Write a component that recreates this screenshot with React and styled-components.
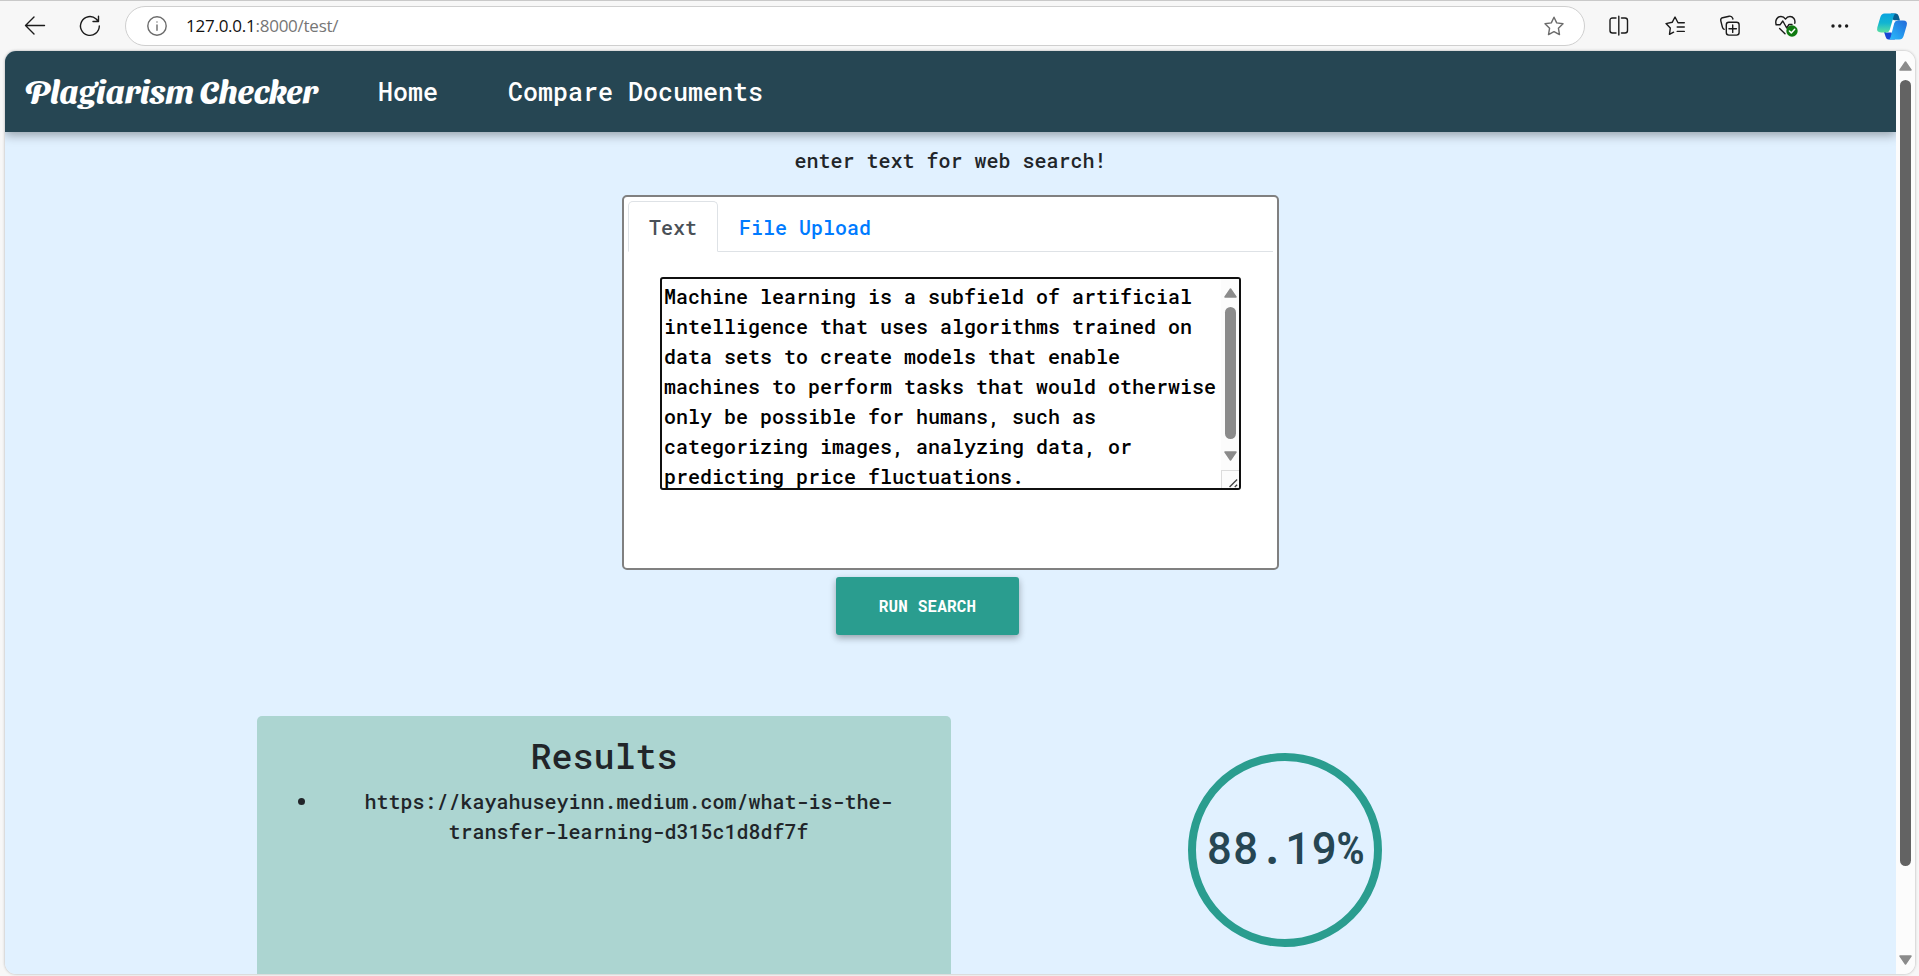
import React from 'react';
import styled, { createGlobalStyle } from 'styled-components';

const Global = createGlobalStyle`
  * { box-sizing: border-box; }
  body { margin: 0; background: #f7f7f7; overflow: hidden; }
`;

const mono = `'Roboto Mono', 'DejaVu Sans Mono', 'Liberation Mono', monospace`;

const Browser = styled.div`
  width: 100%;
  height: 976px;
  display: flex;
  flex-direction: column;
  background: #f7f7f7;
  overflow: hidden;
  font-family: ${mono};
  font-size: 20px;
  font-weight: 500;
  line-height: 30px;
  color: #212529;
`;

const Toolbar = styled.header`
  height: 51px;
  flex: none;
  display: flex;
  align-items: center;
  border-top: 1px solid #c9c9c9;
  padding: 0 5px 0 24px;
`;

const ToolIcon = styled.svg`
  width: ${(p) => p.$w || 22}px;
  height: ${(p) => p.$h || 22}px;
  flex: none;
  margin-left: ${(p) => p.$gap || 0}px;
  fill: none;
  stroke: ${(p) => p.$color || '#1b1b1b'};
  stroke-width: 1.4;
  stroke-linecap: round;
  stroke-linejoin: round;
  overflow: visible;
`;

const AddressBar = styled.div`
  width: 1460px;
  height: 40px;
  flex: none;
  margin-left: 24px;
  padding: 0 20px 0 21px;
  display: flex;
  align-items: center;
  background: #fff;
  border: 1px solid #cfcfcf;
  border-radius: 20px;
`;

const Url = styled.div`
  flex: 1;
  margin-left: 19px;
  font: 17px/24px 'Open Sans', 'Noto Sans', sans-serif;
  letter-spacing: -0.25px;
  color: #767676;
`;

const Host = styled.span`
  color: #111;
`;

const Frame = styled.div`
  height: 923px;
  flex: none;
  margin: 0 4px 0 5px;
  display: flex;
  border-radius: 11px;
  overflow: hidden;
  box-shadow: 0 0 3px rgba(0, 0, 0, 0.3);
`;

const Page = styled.main`
  flex: 1;
  min-width: 0;
  display: flex;
  flex-direction: column;
  align-items: center;
  background: #e1f1ff;
`;

const Navbar = styled.nav`
  width: 100%;
  height: 81px;
  flex: none;
  display: flex;
  align-items: center;
  padding-left: 20px;
  background: #264653;
  box-shadow: 0 3px 10px rgba(0, 0, 0, 0.35);
  color: #fff;
`;

const Brand = styled.div`
  width: 296px;
  padding-bottom: 3px;
  font: bold 32.5px/40px 'Sansita Swashed', 'DejaVu Serif Condensed', 'DejaVu Serif', serif;
  white-space: nowrap;
`;

const NavLink = styled.a`
  margin-left: ${(p) => p.$gap}px;
  font-size: 25px;
  line-height: 38px;
`;

const Prompt = styled.p`
  margin: 13px 0 20px;
`;

const Card = styled.section`
  width: 657px;
  height: 375px;
  flex: none;
  padding: 4px;
  display: flex;
  flex-direction: column;
  background: #fff;
  border: 2px solid #808080;
  border-radius: 5px;
`;

const Tabs = styled.div`
  height: 51px;
  display: flex;
  border-bottom: 1px solid #dee2e6;
`;

const Tab = styled.div`
  height: 51px;
  padding: 10px 20px;
  border: 1px solid ${(p) => (p.$active ? '#dee2e6' : 'transparent')};
  border-bottom-color: ${(p) => (p.$active ? '#fff' : 'transparent')};
  border-radius: 5px 5px 0 0;
  color: ${(p) => (p.$active ? '#495057' : '#007bff')};
`;

const TextBox = styled.div`
  width: 581px;
  height: 213px;
  margin: 25px 0 0 32px;
  display: flex;
  background: #fff;
  border: 2px solid #101010;
  border-radius: 3px;
  overflow: hidden;
  color: #000;
`;

const TextContent = styled.div`
  flex: 1;
  padding: 2px 0 0 2px;
  white-space: pre;
`;

const ScrollTrack = styled.div`
  width: ${(p) => p.$w}px;
  flex: none;
  display: flex;
  flex-direction: column;
  align-items: center;
  padding-top: ${(p) => p.$top}px;
  background: #fcfcfc;
`;

const Arrow = styled.svg`
  width: 13px;
  height: 10px;
  flex: none;
  fill: #8b8b8b;
  stroke: #8b8b8b;
  stroke-width: 1.5;
  stroke-linejoin: round;
`;

const Thumb = styled.div`
  width: 11px;
  height: ${(p) => p.$h}px;
  flex: none;
  margin: ${(p) => p.$m};
  border-radius: 6px;
  background: ${(p) => p.$color};
`;

const Grip = styled.svg`
  width: 18px;
  height: 18px;
  margin-top: 9px;
  border: solid #dcdcdc;
  border-width: 1px 0 0 1px;
  stroke: #444;
  stroke-width: 1.4;
`;

const RunButton = styled.button`
  width: 183px;
  height: 58px;
  flex: none;
  margin: 7px 46px 0 0;
  padding: 0;
  border: 0;
  border-radius: 3px;
  background: #2a9d8f;
  box-shadow: 0 3px 7px rgba(0, 0, 0, 0.33);
  color: #fff;
  font: bold 16px/24px ${mono};
  letter-spacing: 0.13px;
`;

const Outcome = styled.div`
  width: 100%;
  flex: 1;
  min-height: 0;
  margin-top: 81px;
  padding-left: 252px;
  display: flex;
  align-items: flex-start;
`;

const Results = styled.section`
  width: 694px;
  height: 258px;
  padding-top: 18px;
  background: #acd5d1;
  border-radius: 5px 5px 0 0;
  text-align: center;
`;

const Heading = styled.h2`
  margin: 0;
  font-size: 35px;
  line-height: 42px;
  font-weight: 500;
`;

const List = styled.ul`
  margin: 10px 0 0;
  padding-left: 50px;
  list-style: none;
`;

const ListItem = styled.li`
  display: flex;
  align-items: flex-start;
`;

const Bullet = styled.span`
  width: 7px;
  height: 7px;
  flex: none;
  margin: 12px 0 0 -9px;
  border-radius: 50%;
  background: currentColor;
`;

const ResultLink = styled.span`
  flex: 1;
  padding-left: 1px;
`;

const Score = styled.div`
  width: 194px;
  height: 194px;
  flex: none;
  margin: 37px 0 0 237px;
  padding-bottom: 6px;
  display: flex;
  align-items: center;
  justify-content: center;
  border: 8px solid #2a9d8f;
  border-radius: 50%;
  color: #264653;
  font-size: 43.75px;
  line-height: 56px;
`;

const UpArrow = () => (
  <Arrow viewBox="0 0 13 10"><path d="M6.5 1 L12 9 H1 Z" /></Arrow>
);
const DownArrow = () => (
  <Arrow viewBox="0 0 13 10"><path d="M6.5 9 L12 1 H1 Z" /></Arrow>
);

const passage = [
  'Machine learning is a subfield of artificial',
  'intelligence that uses algorithms trained on',
  'data sets to create models that enable',
  'machines to perform tasks that would otherwise',
  'only be possible for humans, such as',
  'categorizing images, analyzing data, or',
  'predicting price fluctuations.',
].join('\n');

const star = 'M10 1.2 L12.7 6.9 L19 7.8 L14.4 12.2 L15.5 18.6 L10 15.6 L4.5 18.6 L5.6 12.2 L1 7.8 L7.3 6.9 Z';

export default function App() {
  return (
    <Browser>
      <Global />
      <Toolbar>
        <ToolIcon $w={22} $h={20} viewBox="0 0 22 20">
          <path d="M20.5 9.5 H1.5 M10 1 L1.5 9.5 L10 18" />
        </ToolIcon>
        <ToolIcon $gap={33} viewBox="0 0 22 22">
          <path d="M20.3 11 A9.4 9.4 0 1 1 17.2 4 L19.2 6.2 M19.5 1.2 V6.5 H14" />
        </ToolIcon>
        <AddressBar>
          <ToolIcon $w={20} $h={20} $color="#6b6b6b" viewBox="0 0 20 20">
            <circle cx="10" cy="10" r="9.2" />
            <path d="M10 9 V14.2 M10 5.9 V6.1" />
          </ToolIcon>
          <Url><Host>127.0.0.1</Host>:8000/test/</Url>
          <ToolIcon $w={20} $h={20} $color="#6b6b6b" viewBox="0 0 20 20"><path d={star} /></ToolIcon>
        </AddressBar>
        <ToolIcon $w={20} $h={20} $gap={24} viewBox="0 0 20 20">
          <path d="M7 2 H3.5 Q1 2 1 4.5 V14.5 Q1 17 3.5 17 H7 M12.5 2 H16 Q18.5 2 18.5 4.5 V14.5 Q18.5 17 16 17 H12.5 M9.8 .3 V19" />
        </ToolIcon>
        <ToolIcon $w={20} $h={20} $gap={36} viewBox="0 0 20 20">
          <path d="M13 6.8 L10 1 L7.2 6.3 L1 7.6 L5.3 12 L4.5 18.3 L8.6 16.2 M13 6.8 H19.3 M12.2 11 H19.3 M12.2 15.4 H19.3" />
        </ToolIcon>
        <ToolIcon $w={20} $h={20} $gap={35} viewBox="0 0 20 20">
          <rect x="6.3" y="6.3" width="12.8" height="12.8" rx="2.5" />
          <path d="M12.7 9 V16.4 M9 12.7 H16.4 M4.2 13.3 Q2.8 12.8 2.4 11.2 L.8 4.8 Q.3 2.4 2.6 1.7 L9.2 .2 Q11.8 -.2 12.7 2.2 L12.9 3" />
        </ToolIcon>
        <ToolIcon $w={24} $h={22} $gap={35} viewBox="0 0 24 22">
          <path d="M1 9 C0 5 2.4 1.5 6 1.5 C8.2 1.5 9.5 2.6 10.5 4.1 C11.5 2.6 13 1.5 15 1.5 C18.4 1.5 20.5 4.6 19.8 8.2 M1 9.8 H5 L7.8 6 L11.7 13 L14 9.5 H17 M4.6 13.4 L10 18.7" />
          <circle cx="17" cy="16" r="5.7" fill="#0f7a10" stroke="none" />
          <path d="M14.4 16 L16.3 17.9 L19.7 14.3" stroke="#fff" strokeWidth="1.5" />
        </ToolIcon>
        <ToolIcon $w={18} $h={6} $gap={32} viewBox="0 0 18 6">
          <g fill="#1b1b1b" stroke="none">
            <circle cx="2" cy="3" r="1.7" /><circle cx="8.8" cy="3" r="1.7" /><circle cx="15.6" cy="3" r="1.7" />
          </g>
        </ToolIcon>
        <ToolIcon $w={30} $h={27} $gap={28} viewBox="0 0 30 27">
          <defs>
            <linearGradient id="cyan" x1="0" y1="0" x2="0" y2="1">
              <stop offset="0" stopColor="#08a3df" /><stop offset=".5" stopColor="#12b5d2" /><stop offset="1" stopColor="#5ce0a0" />
            </linearGradient>
            <linearGradient id="blue" x1="1" y1="0" x2="0" y2="1">
              <stop offset="0" stopColor="#2469d8" /><stop offset=".55" stopColor="#2599ee" /><stop offset="1" stopColor="#2cbdf9" />
            </linearGradient>
          </defs>
          <g stroke="none">
            <path fill="#075f91" d="M14 .5 H19 Q21 .5 21.7 3 L23 7.5 H18 L12 5 Z" />
            <path fill="#1947d4" d="M7 19 L13 17 L18 26.5 H11.5 Q9.5 26.5 8.7 24 Z" />
            <path fill="#fff" d="M17 7.5 H21 L14 19.5 H9 Z" />
            <path fill="url(#cyan)" d="M7.5 .5 H19 Q17.4 .8 16.7 3 L12.8 16.8 Q12 19.5 9.3 19.5 H4 Q-.8 19.5 .3 14.6 L3.4 4 Q4.5 .5 7.5 .5 Z" />
            <path fill="url(#blue)" d="M20.8 7.5 H26 Q31 7.5 29.7 12.4 L26.6 23 Q25.5 26.5 22.2 26.5 H11.5 Q13 26.2 13.7 24 L17.2 10.2 Q18 7.5 20.8 7.5 Z" />
          </g>
        </ToolIcon>
      </Toolbar>
      <Frame>
        <Page>
          <Navbar>
            <Brand>Plagiarism Checker</Brand>
            <NavLink $gap={57}>Home</NavLink>
            <NavLink $gap={70}>Compare Documents</NavLink>
          </Navbar>
          <Prompt>enter text for web search!</Prompt>
          <Card>
            <Tabs>
              <Tab $active>Text</Tab>
              <Tab>File Upload</Tab>
            </Tabs>
            <TextBox>
              <TextContent>{passage}</TextContent>
              <ScrollTrack $w={18} $top={9}>
                <UpArrow />
                <Thumb $h={132} $m="9px 0 12px" $color="#8b8b8b" />
                <DownArrow />
                <Grip viewBox="0 0 18 18"><path d="M8 17 L16 9 M13.5 17 L16 14.5" /></Grip>
              </ScrollTrack>
            </TextBox>
          </Card>
          <RunButton>RUN SEARCH</RunButton>
          <Outcome>
            <Results>
              <Heading>Results</Heading>
              <List>
                <ListItem>
                  <Bullet />
                  <ResultLink>https://kayahuseyinn.medium.com/what-is-the-<br />transfer-learning-d315c1d8df7f</ResultLink>
                </ListItem>
              </List>
            </Results>
            <Score>88.19%</Score>
          </Outcome>
        </Page>
        <ScrollTrack $w={19} $top={10}>
          <UpArrow />
          <Thumb $h={786} $m="9px 0 89px" $color="#636363" />
          <DownArrow />
        </ScrollTrack>
      </Frame>
    </Browser>
  );
}
